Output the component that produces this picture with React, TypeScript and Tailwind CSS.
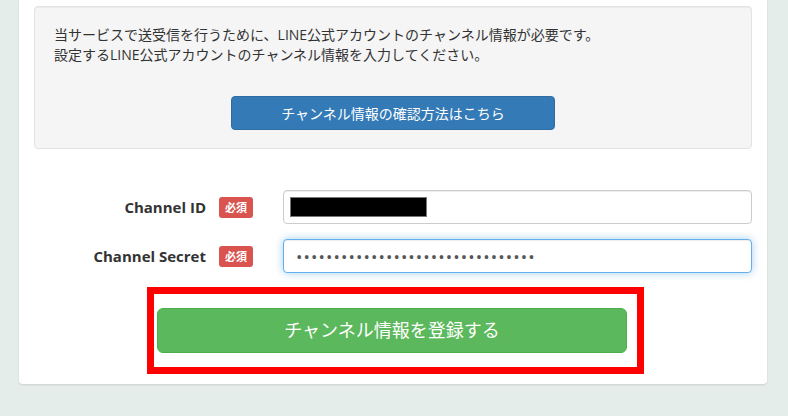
import React from "react";

const FONT = "font-['Open_Sans','Noto_Sans_CJK_JP',sans-serif]";

function RequiredBadge() {
  return (
    <span className="ml-[13px] flex h-[21px] w-[34px] shrink-0 items-center justify-center rounded-[3px] bg-[#d9534f] text-[11px] font-bold leading-none text-white">
      必須
    </span>
  );
}

export default function App() {
  return (
    <div className={`min-h-[416px] w-full bg-[#e5edea] text-[#333] ${FONT}`}>
      <div className="ml-[19px] w-[748px] rounded-b-[4px] bg-white px-[15px] pt-[6px] pb-[10px] shadow-[0_1px_2px_rgba(0,0,0,0.12)]">
        {/* Info well */}
        <div className="h-[143px] rounded-[4px] border border-[#e3e3e3] bg-[#f5f5f5] px-[19px] pt-[18px] shadow-[inset_0_1px_1px_rgba(0,0,0,0.05)]">
          <p className="text-[14px] leading-[20px]">
            当サービスで送受信を行うために、LINE公式アカウントのチャンネル情報が必要です。
            <br />
            設定するLINE公式アカウントのチャンネル情報を入力してください。
          </p>
          <div className="mt-[31px] flex justify-center">
            <button className="h-[34px] w-[324px] rounded-[4px] border border-[#2e6da4] bg-[#337ab7] text-[14px] text-white">
              チャンネル情報の確認方法はこちら
            </button>
          </div>
        </div>

        {/* Form */}
        <div className="mt-[41px] flex flex-col gap-[15px]">
          <div className="flex h-[34px] items-center">
            <label className="w-[172px] text-right text-[15px] font-bold">Channel ID</label>
            <RequiredBadge />
            <div className="ml-[30px] flex h-[34px] flex-1 items-center rounded-[4px] border border-[#ccc] bg-white pl-[6px] shadow-[inset_0_1px_1px_rgba(0,0,0,0.075)]">
              <div className="h-[20px] w-[137px] border border-[#777] bg-black" />
            </div>
          </div>
          <div className="flex h-[34px] items-center">
            <label className="w-[172px] text-right text-[15px] font-bold">Channel Secret</label>
            <RequiredBadge />
            <input
              type="password"
              readOnly
              defaultValue="abcdefghijklmnopqrstuvwxyz012345"
              className="ml-[30px] h-[34px] flex-1 rounded-[4px] border border-[#66afe9] bg-white px-[12px] text-[17px] tracking-[1.1px] text-[#555] shadow-[inset_0_1px_1px_rgba(0,0,0,0.075),0_0_8px_rgba(102,175,233,0.6)] outline-none"
            />
          </div>
        </div>

        {/* Submit */}
        <div className="mt-[14px] ml-[113px] w-[497px] border-[7px] border-[#ff0000] py-[14px] pr-[10px] pl-[3px]">
          <button className="h-[45px] w-full rounded-[6px] border border-[#4cae4c] bg-[#5cb85c] text-[18px] text-white">
            チャンネル情報を登録する
          </button>
        </div>
      </div>
    </div>
  );
}
